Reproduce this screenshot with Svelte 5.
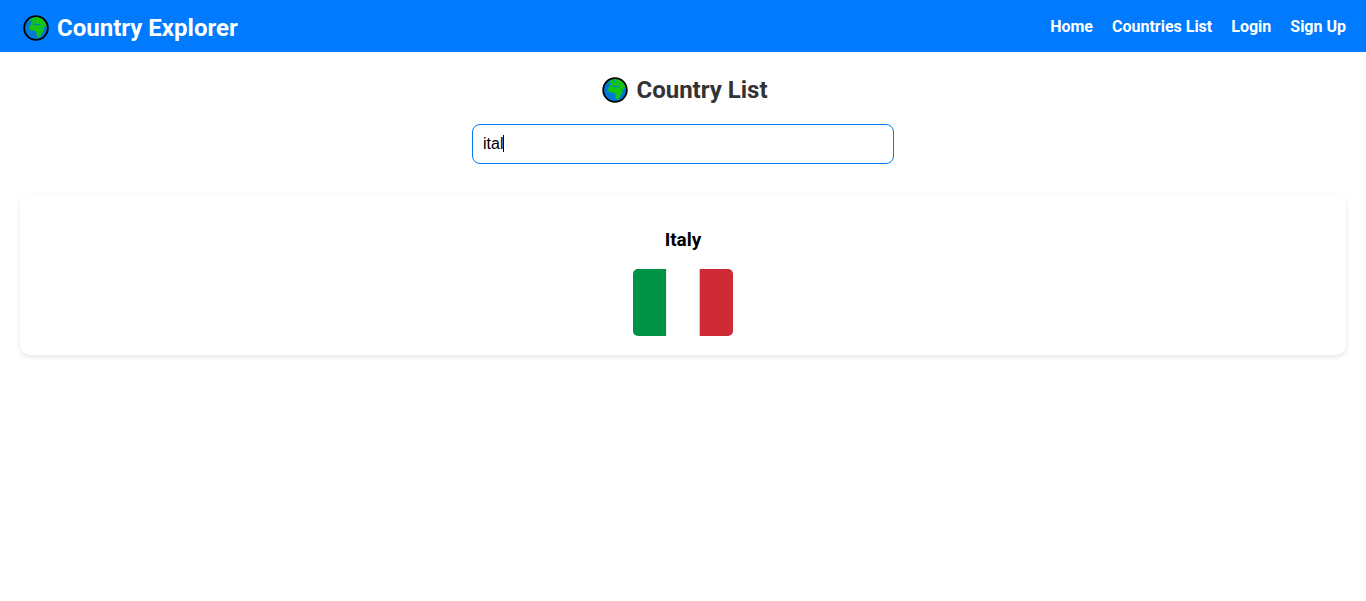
<script>
  let query = $state('ital');
  const links = ['Home', 'Countries List', 'Login', 'Sign Up'];
  const countries = [{ name: 'Italy', colours: ['#009246', '#ffffff', '#ce2b37'] }];
  const shown = $derived(countries.filter((c) => c.name.toLowerCase().includes(query.toLowerCase())));
</script>

{#snippet globe()}
  <svg class="globe" viewBox="0 0 26 26" aria-hidden="true">
    <circle cx="13" cy="13" r="11.9" fill="#0078d7" />
    <path
      fill="#16c60c"
      d="M7.4 4.4 10.4 2.4 14 1.6 18 2.6 21.4 5.4 23.8 9.6 24 12 22.6 10.8 21.4 10.6 22 12 20.6 13.6 19.6 13.4 18.6 11.2 19 13.2 19.8 14.4 21.2 14.2 20.2 16.2 18.4 18.2 18 20.2 16.2 22.4 14.6 22.6 13.8 20.4 13.4 17.8 12.6 15.8 10.4 15.6 7.8 15.4 6.2 13.6 6.2 11.4 8 9.6 7.6 8.4 9.4 7.2 10.2 6 9 6.4 8.6 5.2 7 6.2 5.6 6.6z"
    />
    <path fill="#0078d7" d="M9.4 9.4 11 8.2 12.4 8.8 14 8.4 15 9.2 17.6 9.2 17.8 10.2 15.2 10.2 13.4 9.9 11.4 9.7zM12 3.6 13.2 3.2 12.8 5.2 11.4 5.6zM16 7.2 17.4 7 17.4 7.7 16.2 7.8z" />
    <circle cx="13" cy="13" r="11.8" fill="none" stroke="#000" stroke-width="1.8" />
  </svg>
{/snippet}

<header>
  <div class="brand">{@render globe()}<span>Country Explorer</span></div>
  <nav>
    {#each links as link}
      <a href="#{link.toLowerCase().replace(' ', '-')}">{link}</a>
    {/each}
  </nav>
</header>

<main>
  <h2>{@render globe()}<span>Country List</span></h2>
  <div class="search">
    <input type="text" aria-label="Search for a country" bind:value={query} />
    <span class="caret" aria-hidden="true"></span>
  </div>
  <div class="list">
    {#each shown as country}
      <article>
        <h3>{country.name}</h3>
        <svg class="flag" viewBox="0 0 3 2" preserveAspectRatio="none" role="img" aria-label={country.name}>
          {#each country.colours as colour, i}
            <rect x={i} width="1" height="2" fill={colour} />
          {/each}
        </svg>
      </article>
    {/each}
  </div>
</main>

<style>
  :global(body) {
    margin: 0;
    background: #fff;
    font-family: Roboto, sans-serif;
  }
  header {
    display: flex;
    justify-content: space-between;
    align-items: center;
    box-sizing: border-box;
    min-height: 52px;
    padding: 0 20px;
    background: #007bff;
    color: #fff;
  }
  .brand,
  h2 {
    display: flex;
    align-items: center;
    gap: 8px;
    font-size: 24px;
    line-height: 28px;
    font-weight: 700;
  }
  .brand {
    padding-left: 3px;
    padding-top: 3px;
  }
  .globe {
    width: 26px;
    height: 26px;
    flex: none;
  }
  nav {
    display: flex;
    gap: 19px;
    padding-top: 2px;
  }
  nav a {
    color: #fff;
    font-size: 16px;
    line-height: 20px;
    font-weight: 700;
    text-decoration: none;
  }
  main {
    padding: 24px 20px;
  }
  h2 {
    justify-content: center;
    margin: 0 0 20px;
    padding-left: 4px;
    color: #333;
  }
  .search {
    position: relative;
    max-width: 422px;
    margin: 0 auto 30px;
  }
  input {
    display: block;
    box-sizing: border-box;
    width: 100%;
    height: 40px;
    padding: 10px;
    border: 1px solid #007bff;
    border-radius: 8px;
    outline: none;
    background: #fff;
    color: #000;
    font-family: "Liberation Sans", Arial, sans-serif;
    font-size: 16px;
  }
  .caret {
    position: absolute;
    left: 31px;
    top: 11px;
    width: 1px;
    height: 17px;
    background: #000;
  }
  article {
    display: flex;
    flex-direction: column;
    align-items: center;
    padding: 35px 20px 19px;
    border-radius: 10px;
    background: #fff;
    box-shadow: 0 2px 5px rgba(0, 0, 0, 0.1);
  }
  h3 {
    margin: 0 0 18px;
    color: #000;
    font-size: 19px;
    line-height: 22px;
    font-weight: 700;
  }
  .flag {
    width: 100px;
    height: 67px;
    border-radius: 5px;
  }
</style>
